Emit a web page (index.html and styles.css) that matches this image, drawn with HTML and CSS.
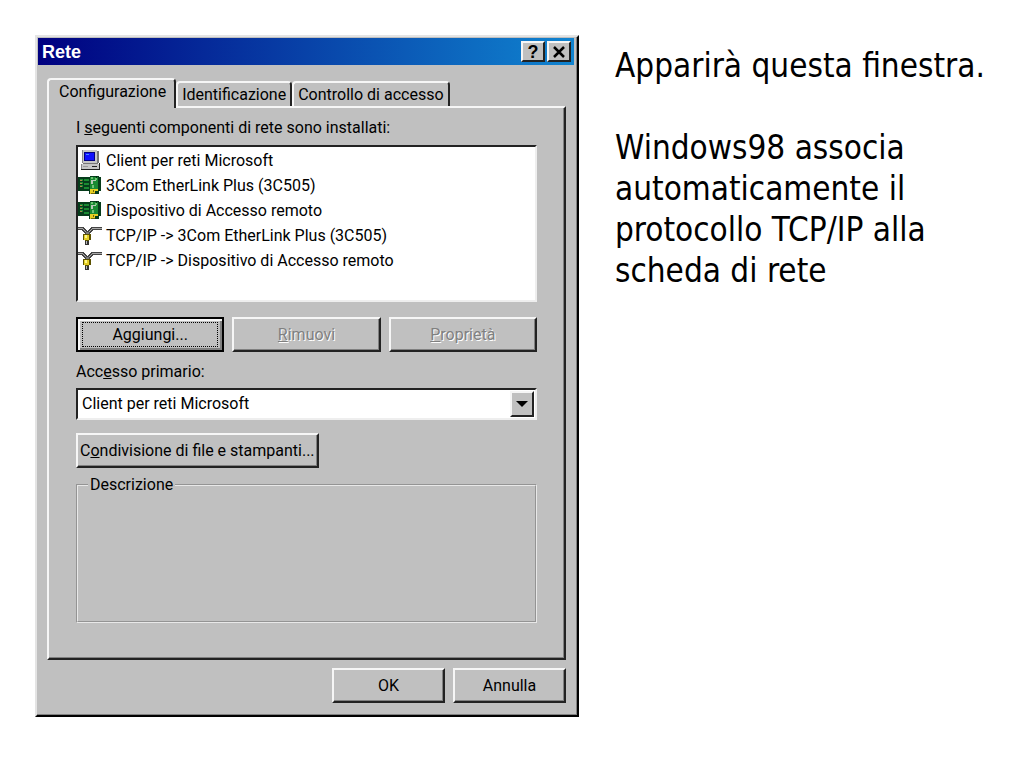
FILE: index.html
```html
<!DOCTYPE html>
<html lang="it">
<head>
    <meta charset="UTF-8">
    <meta name="viewport" content="width=device-width, initial-scale=1.0">
    <title>Rete</title>
    <link rel="stylesheet" href="styles.css">
</head>
<body>
    <!-- Shared icons -->
    <svg class="icon-defs" aria-hidden="true">
        <symbol id="icon-client" viewBox="0 0 24 21">
            <path fill="#c6c6c6" d="M4 0h15v13H4z"/>
            <path fill="#777" d="M19 1h2v12h-2zM5 13h15v1H5z"/>
            <path fill="#000080" d="M6 2h11v9H6z"/>
            <path fill="#1010ff" d="M7 3h9v7H7z"/>
            <path fill="#4a8cff" d="M8 4h3v1H8z"/>
            <path fill="#c6c6c6" d="M3 14h18v5H3z"/>
            <path fill="#999" d="M5 16h5v1H5z"/>
            <path fill="#222" d="M14 16h5v1h-5zM21 13h1v7h-1zM3 19h19v1H3z"/>
            <path fill="#888" d="M3 14h1v5H3zM4 0h1v13H4z"/>
        </symbol>
        <symbol id="icon-card" viewBox="0 0 24 21">
            <path fill="#063c1b" d="M0 2h12V1h9v1h2v14h-2v3H11v-3H0z"/>
            <path fill="#198a32" d="M2 4h3v2H2zM2 7h3v2H2zM2 10h3v2H2zM6 4h5v2H6zM6 8h5v2H6zM6 12h5v2H6zM12 2h8v13h-8z"/>
            <path fill="#a88a4a" d="M2 5h2v1H2zM2 8h2v1H2zM2 11h2v1H2z"/>
            <path fill="#6fc274" d="M13 2h2v2h-2zM17 3h2v2h-2zM14 10h2v3h-2z"/>
            <path fill="#b8c8b8" d="M13 5h5v4h-5z"/>
            <path fill="#198a32" d="M15 6h3v3h-3z"/>
            <path fill="#052b12" d="M18 1h1v2h-1z"/>
            <path fill="#e6cf22" d="M12 14h8v2h-3v3h-5z"/>
            <path fill="#73670a" d="M13 18h4v1h-4zM15 15h1v2h-1z"/>
        </symbol>
        <symbol id="icon-protocol" viewBox="0 0 24 21">
            <path fill="none" stroke="#444" stroke-width="3" d="M0 3h4l4 4h3l4-4h9"/>
            <path fill="none" stroke="#aaa" d="M0 3h4l4 4h3l4-4h9"/>
            <path fill="#777" d="M8 7h3v3H8z"/>
            <path fill="#5b5100" d="M5 9h8v6h-2v2H7v-2H5z"/>
            <path fill="#e5cf25" d="M6 10h5v5H6z"/>
            <path fill="#fff68a" d="M7 10h2v3H7z"/>
            <path fill="#333" d="M7 16h4v4H7z"/>
            <path fill="#bbb" d="M8 16h1v3H8z"/>
        </symbol>
    </svg>

    <main class="slide">
        <!-- Network dialog -->
        <section class="dialog" aria-label="Rete">
            <header class="title-bar">
                <h1>Rete</h1>
                <button class="title-button" aria-label="Guida">?</button>
                <button class="title-button" aria-label="Chiudi">
                    <svg width="14" height="12" viewBox="0 0 14 12"><path stroke="#000" stroke-width="2.5" d="M2 1l10 10M12 1L2 11"/></svg>
                </button>
            </header>

            <div class="tabs" role="tablist">
                <button class="tab active" role="tab" aria-selected="true">Configurazione</button>
                <button class="tab" role="tab" aria-selected="false">Identificazione</button>
                <button class="tab" role="tab" aria-selected="false">Controllo di accesso</button>
            </div>

            <div class="panel" role="tabpanel">
                <p class="label" id="componentsLabel">I <u>s</u>eguenti componenti di rete sono installati:</p>
                <ul class="components" role="listbox" aria-labelledby="componentsLabel">
                    <li role="option"><svg class="icon"><use href="#icon-client"/></svg>Client per reti Microsoft</li>
                    <li role="option"><svg class="icon"><use href="#icon-card"/></svg>3Com EtherLink Plus (3C505)</li>
                    <li role="option"><svg class="icon"><use href="#icon-card"/></svg>Dispositivo di Accesso remoto</li>
                    <li role="option"><svg class="icon"><use href="#icon-protocol"/></svg>TCP/IP -&gt; 3Com EtherLink Plus (3C505)</li>
                    <li role="option"><svg class="icon"><use href="#icon-protocol"/></svg>TCP/IP -&gt; Dispositivo di Accesso remoto</li>
                </ul>

                <div class="actions">
                    <button class="button default"><span>Ag<u>g</u>iungi...</span></button>
                    <button class="button" disabled><u>R</u>imuovi</button>
                    <button class="button" disabled><u>P</u>roprietà</button>
                </div>

                <label class="label" for="primaryLogon">Acc<u>e</u>sso primario:</label>
                <div class="combo">
                    <select id="primaryLogon">
                        <option>Client per reti Microsoft</option>
                    </select>
                    <span class="combo-arrow"></span>
                </div>

                <button class="button sharing">C<u>o</u>ndivisione di file e stampanti...</button>

                <fieldset class="description">
                    <legend>Descrizione</legend>
                </fieldset>
            </div>

            <footer class="dialog-footer">
                <button class="button">OK</button>
                <button class="button">Annulla</button>
            </footer>
        </section>

        <!-- Slide text -->
        <div class="notes">
            <p>Apparirà questa finestra.</p>
            <p>Windows98 associa automaticamente il protocollo TCP/IP alla scheda di rete</p>
        </div>
    </main>
</body>
</html>
```
FILE: styles.css
```css
:root {
    --face: #c0c0c0;
    --light: #f6f6f6;
    --shadow: #808080;
    --dark: #222222;
    --ui-font: Roboto, "Liberation Sans", sans-serif;
}

* {
    margin: 0;
    padding: 0;
    box-sizing: border-box;
}

body {
    background: #fff;
    color: #000;
}

.icon-defs {
    position: absolute;
    width: 0;
    height: 0;
}

.slide {
    display: grid;
    grid-template-columns: minmax(0, 544px) minmax(0, 1fr);
    align-items: start;
    gap: 36px;
    padding: 35px 24px 35px 35px;
}

/* Dialog */
.dialog {
    padding: 1px 3px 12px 1px;
    background: var(--face);
    border: 2px solid;
    border-color: #e4e4e4 #000 #000 #e4e4e4;
    box-shadow: inset -1px -1px var(--shadow);
    font-family: var(--ui-font);
    font-size: 16px;
    line-height: 24px;
}

.dialog button,
.dialog select {
    font: inherit;
    color: #000;
}

.title-bar {
    display: flex;
    align-items: center;
    height: 27px;
    padding: 0 3px 0 4px;
    background: linear-gradient(to right, #000080, #1084d0);
}

.title-bar h1 {
    flex: 1;
    color: #fff;
    font-family: "Liberation Sans", sans-serif;
    font-size: 18px;
    font-weight: bold;
}

.title-bar .title-button {
    display: flex;
    align-items: center;
    justify-content: center;
    width: 24px;
    height: 21px;
    margin-left: 2px;
    background: var(--face);
    border: 2px solid;
    border-color: var(--light) var(--dark) var(--dark) var(--light);
    font-family: "Liberation Sans", sans-serif;
    font-size: 18px;
    font-weight: bold;
}

/* Tabs */
.tabs {
    display: flex;
    align-items: flex-end;
    margin: 13px 0 0 9px;
}

.tab {
    height: 25px;
    padding: 0 4px;
    background: var(--face);
    border: 2px solid;
    border-color: var(--light) var(--dark) transparent var(--light);
    border-bottom: 0;
    border-radius: 4px 4px 0 0;
}

.tab.active {
    position: relative;
    height: 30px;
    margin-bottom: -2px;
    padding: 0 8px 4px 10px;
}

.panel {
    margin: 0 8px 0 9px;
    padding: 8px 27px 35px;
    border: 2px solid;
    border-color: var(--light) var(--dark) var(--dark) var(--light);
    box-shadow: inset -1px -1px var(--shadow);
}

.label {
    display: block;
}

/* Component list */
.components {
    height: 157px;
    padding-top: 1px;
    margin-top: 5px;
    background: #fff;
    border: 2px solid;
    border-color: var(--dark) #eee #eee var(--dark);
    list-style: none;
    overflow: hidden;
}

.components li {
    display: flex;
    align-items: center;
    height: 25px;
    gap: 4px;
}

.components .icon {
    width: 24px;
    height: 21px;
    shape-rendering: crispEdges;
}

/* Buttons */
.button {
    height: 35px;
    background: var(--face);
    border: 2px solid;
    border-color: var(--light) var(--dark) var(--dark) var(--light);
    box-shadow: inset -1px -1px var(--shadow);
}

.dialog .button:disabled {
    color: var(--shadow);
    text-shadow: 1px 1px #fff;
}

.button.default {
    padding: 3px 4px;
    border-color: #000;
    box-shadow: inset 2px 2px var(--light), inset -2px -2px var(--shadow);
}

.button.default span {
    display: block;
    border: 1px dotted #000;
    line-height: 23px;
}

.actions {
    display: grid;
    grid-template-columns: repeat(3, 1fr);
    gap: 8px;
    margin: 15px 0 8px;
}

/* Combo box */
.combo {
    display: flex;
    height: 32px;
    margin: 4px 0 13px;
    background: #fff;
    border: 2px solid;
    border-color: var(--dark) #eee #eee var(--dark);
    position: relative;
}

.combo select {
    flex: 1;
    padding-left: 4px;
    appearance: none;
    background: transparent;
    border: 0;
    outline: 0;
}

.combo-arrow {
    display: flex;
    align-items: center;
    justify-content: center;
    position: absolute;
    top: 1px;
    right: 1px;
    bottom: 1px;
    width: 24px;
    background: var(--face);
    border: 2px solid;
    border-color: var(--light) var(--dark) var(--dark) var(--light);
    pointer-events: none;
}

.combo-arrow::after {
    content: '';
    border: 6px solid transparent;
    border-top-color: #000;
    border-bottom: 0;
}

.sharing {
    padding: 0 2px;
}

/* Description group */
.description {
    height: 150px;
    margin-top: 5px;
    padding: 0 10px;
    border: 2px groove #e8e8e8;
}

.description legend {
    padding: 0 2px;
}

.dialog-footer {
    display: flex;
    justify-content: flex-end;
    gap: 8px;
    margin: 8px 8px 0 0;
}

.dialog-footer .button {
    width: 113px;
}

/* Slide text */
.notes {
    padding-top: 10px;
    font-family: "DejaVu Sans Condensed", "DejaVu Sans", sans-serif;
    font-size: 33px;
    line-height: 41px;
}

.notes p + p {
    margin-top: 41px;
}
```
